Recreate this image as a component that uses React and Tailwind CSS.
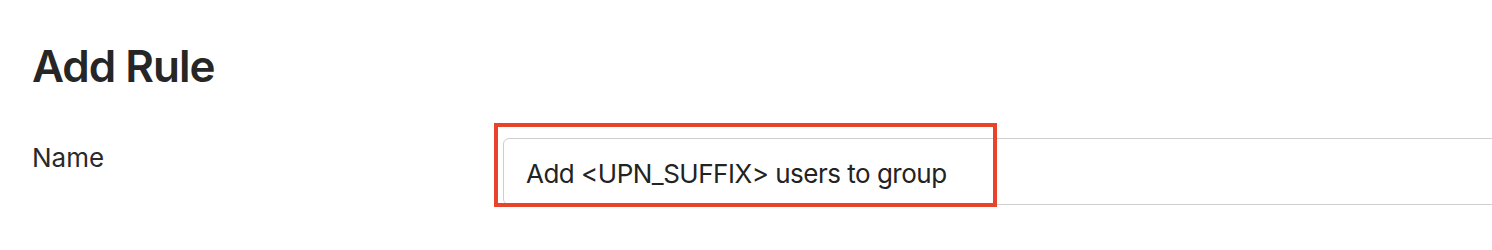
const App = () => {
  return (
    <div
      className="w-[1492px] h-[250px] overflow-hidden bg-white text-[#262626]"
      style={{ fontFamily: "Inter, 'Noto Sans', sans-serif" }}
    >
      <div className="pl-8 pt-[42px]">
        <h1 className="text-[44px] leading-[48px] font-semibold tracking-[-1px]">
          Add Rule
        </h1>

        <div className="flex mt-[48px]">
          <label className="w-[471px] shrink-0 pt-[4px] text-[26px] leading-[32px] text-[#2a2a2a]">
            Name
          </label>

          <div className="relative shrink-0">
            <div className="w-[1100px] h-[67px] flex items-center pt-[3px] pl-[22px] border border-[#cfcfcf] rounded-[6px] text-[26px] tracking-[-0.5px] text-[#232323]">
              Add &lt;UPN_SUFFIX&gt; users to group
            </div>
            {/* annotation box over the field */}
            <div className="absolute left-[-9px] top-[-15px] w-[503px] h-[84px] border-[4px] border-[#e8442c] pointer-events-none" />
          </div>
        </div>
      </div>
    </div>
  );
};

export default App;
